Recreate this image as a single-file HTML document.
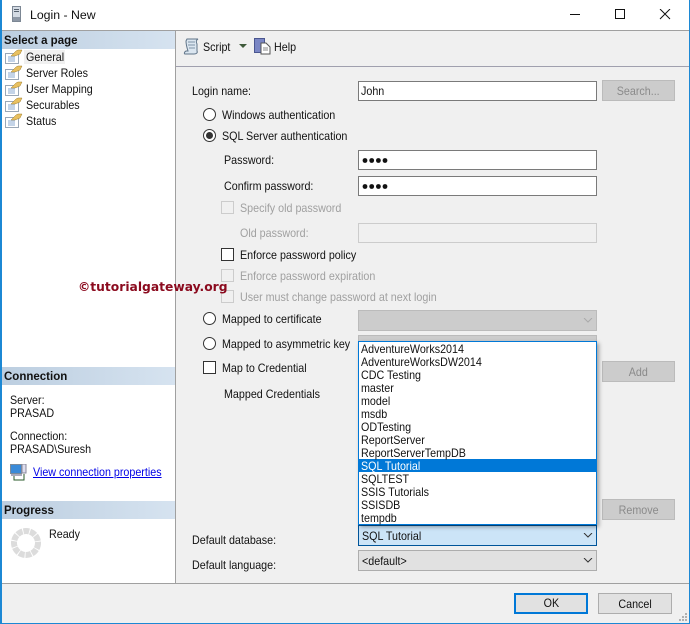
<!DOCTYPE html>
<html><head><meta charset="utf-8"><style>
html,body{margin:0;padding:0}
body{width:690px;height:624px;position:relative;overflow:hidden;background:#fff;font:11.6px/14px "Liberation Sans",sans-serif;color:#111}
.a,.t,.g,.r,.c,.b,.i,.cb,svg{position:absolute}
.t,.g,.s{transform:scaleX(.925);transform-origin:0 0}
.s{display:inline-block;white-space:nowrap}
.b .s{transform-origin:50% 0}
.t{white-space:nowrap;margin-top:1px}
.g{white-space:nowrap;color:#a0a0a0;margin-top:1px}
.r{width:11px;height:11px;border:1px solid #333;border-radius:50%;background:#fff;left:203px}
.c{width:11px;height:11px;border:1px solid #333;background:#fff}
.c.d{border-color:#ccc;background:#f0f0f0}
.b{background:#ccc;border:1px solid #bbb;box-sizing:border-box;color:#8a8a8a;text-align:center;line-height:21px}
.i{left:358px;width:239px;box-sizing:border-box;background:#fff;border:1px solid #7a7a7a}
.h{position:absolute;left:2px;width:173px;height:18px;background:linear-gradient(90deg,#bccee0,#d6e3f0);font-weight:bold;line-height:20px;text-indent:2px;font-size:11.5px;color:#111}
.cb{left:358px;width:239px;box-sizing:border-box}
.l div{height:13px;line-height:15px;padding-left:2px;white-space:nowrap}
</style></head><body>
<div class="a" style="left:176px;top:31px;width:514px;height:552px;background:#f0f0f0"></div>
<div class="a" style="left:0;top:584px;width:690px;height:40px;background:#f0f0f0"></div>
<div class="a" style="left:0;top:30px;width:690px;height:1px;background:#a0a0a0"></div>
<div class="a" style="left:175px;top:31px;width:1px;height:553px;background:#a0a0a0"></div>
<div class="a" style="left:176px;top:66px;width:514px;height:1px;background:#a0a0ae"></div>
<div class="a" style="left:0;top:583px;width:690px;height:1px;background:#a0a0a0"></div>
<div class="a" style="left:0;top:0;width:2px;height:624px;background:#1c88d4"></div>
<div class="a" style="left:689px;top:0;width:1px;height:624px;background:#1c88d4"></div>
<div class="a" style="left:0;top:623px;width:690px;height:1px;background:#1c88d4"></div>

<svg style="left:12px;top:6px" width="10" height="16"><rect x=".5" y=".5" width="8" height="15" fill="#d4dbe4" stroke="#7c8794"/><rect x="2" y="3" width="5" height="1" fill="#56616e"/><rect x="2" y="5" width="5" height="1" fill="#56616e"/><rect x="1" y="11" width="7" height="4" fill="#8e98a6"/></svg>
<div class="t" style="left:30px;top:7px;font-size:12.3px;transform:none">Login - New</div>
<svg style="left:570px;top:9px" width="110" height="12" fill="none" stroke="#111"><path d="M0 5.5H10"/><rect x="45.5" y=".5" width="9" height="9"/><path d="M90 0L100 10M100 0L90 10"/></svg>

<div class="h" style="top:31px">Select a page</div>
<div class="a" style="left:24px;top:50px;width:41px;height:14px;background:#f0f0f0"></div>
<svg width="0" height="0"><defs><g id="p"><rect x=".5" y="4.5" width="13" height="10" fill="#fff" stroke="#9aa7b6"/><path d="M3 8H10M3 10H10M3 12H10" stroke="#8aa8d0"/><path d="M6 7L11 2L13 1L17 1L15 5L10 7Z" fill="#e8c060" stroke="#a08030" stroke-width=".5"/></g></defs></svg>
<svg style="left:5px;top:49px" width="18" height="16"><use href="#p"/></svg>
<svg style="left:5px;top:65px" width="18" height="16"><use href="#p"/></svg>
<svg style="left:5px;top:81px" width="18" height="16"><use href="#p"/></svg>
<svg style="left:5px;top:97px" width="18" height="16"><use href="#p"/></svg>
<svg style="left:5px;top:113px" width="18" height="16"><use href="#p"/></svg>
<div class="t" style="left:26px;top:50px">General</div>
<div class="t" style="left:26px;top:66px">Server Roles</div>
<div class="t" style="left:26px;top:82px">User Mapping</div>
<div class="t" style="left:26px;top:98px">Securables</div>
<div class="t" style="left:26px;top:114px">Status</div>

<div class="h" style="top:367px">Connection</div>
<div class="t" style="left:10px;top:393px">Server:</div>
<div class="t" style="left:10px;top:406px">PRASAD</div>
<div class="t" style="left:10px;top:429px">Connection:</div>
<div class="t" style="left:10px;top:442px">PRASAD\Suresh</div>
<svg style="left:10px;top:464px" width="17" height="17"><rect x=".5" y=".5" width="11" height="9" fill="#3a8ad8" stroke="#7a8a9a"/><rect x="12" y="0" width="4" height="9" fill="#dde" stroke="#889"/><rect x="1" y="10" width="11" height="2" fill="#aab"/><path d="M4 12V16H14V10" fill="none" stroke="#2a5a2a"/></svg>
<div class="t" style="left:33px;top:465px;color:#0000e6;text-decoration:underline">View connection properties</div>
<div class="h" style="top:501px">Progress</div>
<svg style="left:10px;top:527px" width="32" height="32"><circle cx="16" cy="16" r="12" fill="none" stroke="#dcdcdc" stroke-width="6" stroke-dasharray="5.8 .9"/></svg>
<div class="t" style="left:49px;top:527px">Ready</div>

<svg style="left:183px;top:38px" width="17" height="17"><path d="M4 1H15C13 2 13 4 14 6L14 13C15 15 13 16 11 16H2C1 16 1 14 3 13L5 13C4 10 3 6 3 3Z" fill="#dbe6f0" stroke="#5f7488"/><path d="M5 4H12M5 7H12M6 10H12" stroke="#7e92a6"/></svg>
<div class="t" style="left:203px;top:40px">Script</div>
<svg style="left:239px;top:44px" width="9" height="5"><path d="M0 0H8L4 4Z" fill="#3f5a3a"/></svg>
<svg style="left:254px;top:38px" width="17" height="17"><rect x=".5" y=".5" width="10" height="14" fill="#7a86c4" stroke="#4a5690"/><path d="M7 5H12L16 9V16H7Z" fill="#fff" stroke="#555"/><path d="M9 10H14M9 12H14" stroke="#888"/></svg>
<div class="t" style="left:274px;top:40px">Help</div>

<div class="t" style="left:192px;top:84px">Login name:</div>
<div class="i" style="top:81px;height:20px;line-height:19px;padding-left:2px"><span class="s">John</span></div>
<div class="b" style="left:602px;top:80px;width:73px;height:21px"><span class="s">Search...</span></div>

<div class="r" style="top:108px"></div><div class="t" style="left:222px;top:108px">Windows authentication</div>
<div class="r" style="top:129px"></div><div class="a" style="left:206px;top:132px;width:7px;height:7px;border-radius:50%;background:#333"></div><div class="t" style="left:222px;top:129px">SQL Server authentication</div>

<div class="t" style="left:224px;top:153px">Password:</div>
<div class="i" style="top:150px;height:20px"></div>
<div class="t" style="left:224px;top:179px">Confirm password:</div>
<div class="i" style="top:176px;height:20px"></div>
<svg style="left:361px;top:156px" width="30" height="34" fill="#111"><circle cx="4" cy="4.5" r="2.4"/><circle cx="10.7" cy="4.5" r="2.4"/><circle cx="17.4" cy="4.5" r="2.4"/><circle cx="24" cy="4.5" r="2.4"/><circle cx="4" cy="30.5" r="2.4"/><circle cx="10.7" cy="30.5" r="2.4"/><circle cx="17.4" cy="30.5" r="2.4"/><circle cx="24" cy="30.5" r="2.4"/></svg>

<div class="c d" style="left:221px;top:201px"></div><div class="g" style="left:240px;top:201px">Specify old password</div>
<div class="g" style="left:240px;top:226px">Old password:</div>
<div class="i" style="top:223px;height:20px;background:#f0f0f0;border-color:#ccc"></div>
<div class="c" style="left:221px;top:248px"></div><div class="t" style="left:240px;top:248px">Enforce password policy</div>
<div class="c d" style="left:221px;top:269px"></div><div class="g" style="left:240px;top:269px">Enforce password expiration</div>
<div class="c d" style="left:221px;top:290px"></div><div class="g" style="left:240px;top:290px">User must change password at next login</div>

<div class="t" style="left:78px;top:278px;font:bold 12.3px/16px 'DejaVu Sans',sans-serif;transform:none;color:#8b0a1e">©tutorialgateway.org</div>

<div class="r" style="top:312px"></div><div class="t" style="left:222px;top:312px">Mapped to certificate</div>
<div class="cb" style="top:310px;height:21px;background:#ccc;border:1px solid #bbb"></div>
<svg style="left:583px;top:318px" width="10" height="6" fill="none" stroke="#aaa"><path d="M1 0L5 4L9 0"/></svg>
<div class="r" style="top:337px"></div><div class="t" style="left:222px;top:337px">Mapped to asymmetric key</div>
<div class="cb" style="top:335px;height:10px;background:#ccc;border:1px solid #bbb"></div>
<div class="c" style="left:203px;top:361px"></div><div class="t" style="left:222px;top:361px">Map to Credential</div>
<div class="t" style="left:224px;top:387px">Mapped Credentials</div>
<div class="b" style="left:602px;top:361px;width:73px;height:21px"><span class="s">Add</span></div>
<div class="b" style="left:602px;top:499px;width:73px;height:21px"><span class="s">Remove</span></div>

<div class="t" style="left:192px;top:533px">Default database:</div>
<div class="t" style="left:192px;top:558px">Default language:</div>
<div class="cb" style="top:525px;height:21px;background:#cce4f7;border:1px solid #005499;line-height:21px;padding-left:3px"><span class="s">SQL Tutorial</span></div>
<svg style="left:583px;top:533px" width="10" height="6" fill="none" stroke="#333"><path d="M1 0L5 4L9 0"/></svg>
<div class="cb" style="top:550px;height:21px;background:#e1e1e1;border:1px solid #adadad;line-height:21px;padding-left:3px"><span class="s">&lt;default&gt;</span></div>
<svg style="left:583px;top:558px" width="10" height="6" fill="none" stroke="#333"><path d="M1 0L5 4L9 0"/></svg>

<div class="a l" style="left:358px;top:341px;width:239px;height:184px;box-sizing:border-box;background:#fff;border:1px solid #0078d7;box-shadow:2px 2px 4px rgba(0,0,0,.35)">
<div><span class="s">AdventureWorks2014</span></div><div><span class="s">AdventureWorksDW2014</span></div><div><span class="s">CDC Testing</span></div><div><span class="s">master</span></div><div><span class="s">model</span></div><div><span class="s">msdb</span></div><div><span class="s">ODTesting</span></div><div><span class="s">ReportServer</span></div><div><span class="s">ReportServerTempDB</span></div><div style="background:#0078d7;color:#fff"><span class="s">SQL Tutorial</span></div><div><span class="s">SQLTEST</span></div><div><span class="s">SSIS Tutorials</span></div><div><span class="s">SSISDB</span></div><div><span class="s">tempdb</span></div>
</div>

<div class="b" style="left:514px;top:593px;width:74px;height:21px;background:#e1e1e1;border:2px solid #0078d7;color:#111;line-height:18px"><span class="s">OK</span></div>
<div class="b" style="left:598px;top:593px;width:74px;height:21px;background:#e1e1e1;border-color:#adadad;color:#111"><span class="s">Cancel</span></div>
<svg style="left:678px;top:612px" width="10" height="10" fill="#b0b0b0"><rect x="7" y="1" width="2" height="2"/><rect x="4" y="4" width="2" height="2"/><rect x="7" y="4" width="2" height="2"/><rect x="1" y="7" width="2" height="2"/><rect x="4" y="7" width="2" height="2"/><rect x="7" y="7" width="2" height="2"/></svg>
</body></html>
